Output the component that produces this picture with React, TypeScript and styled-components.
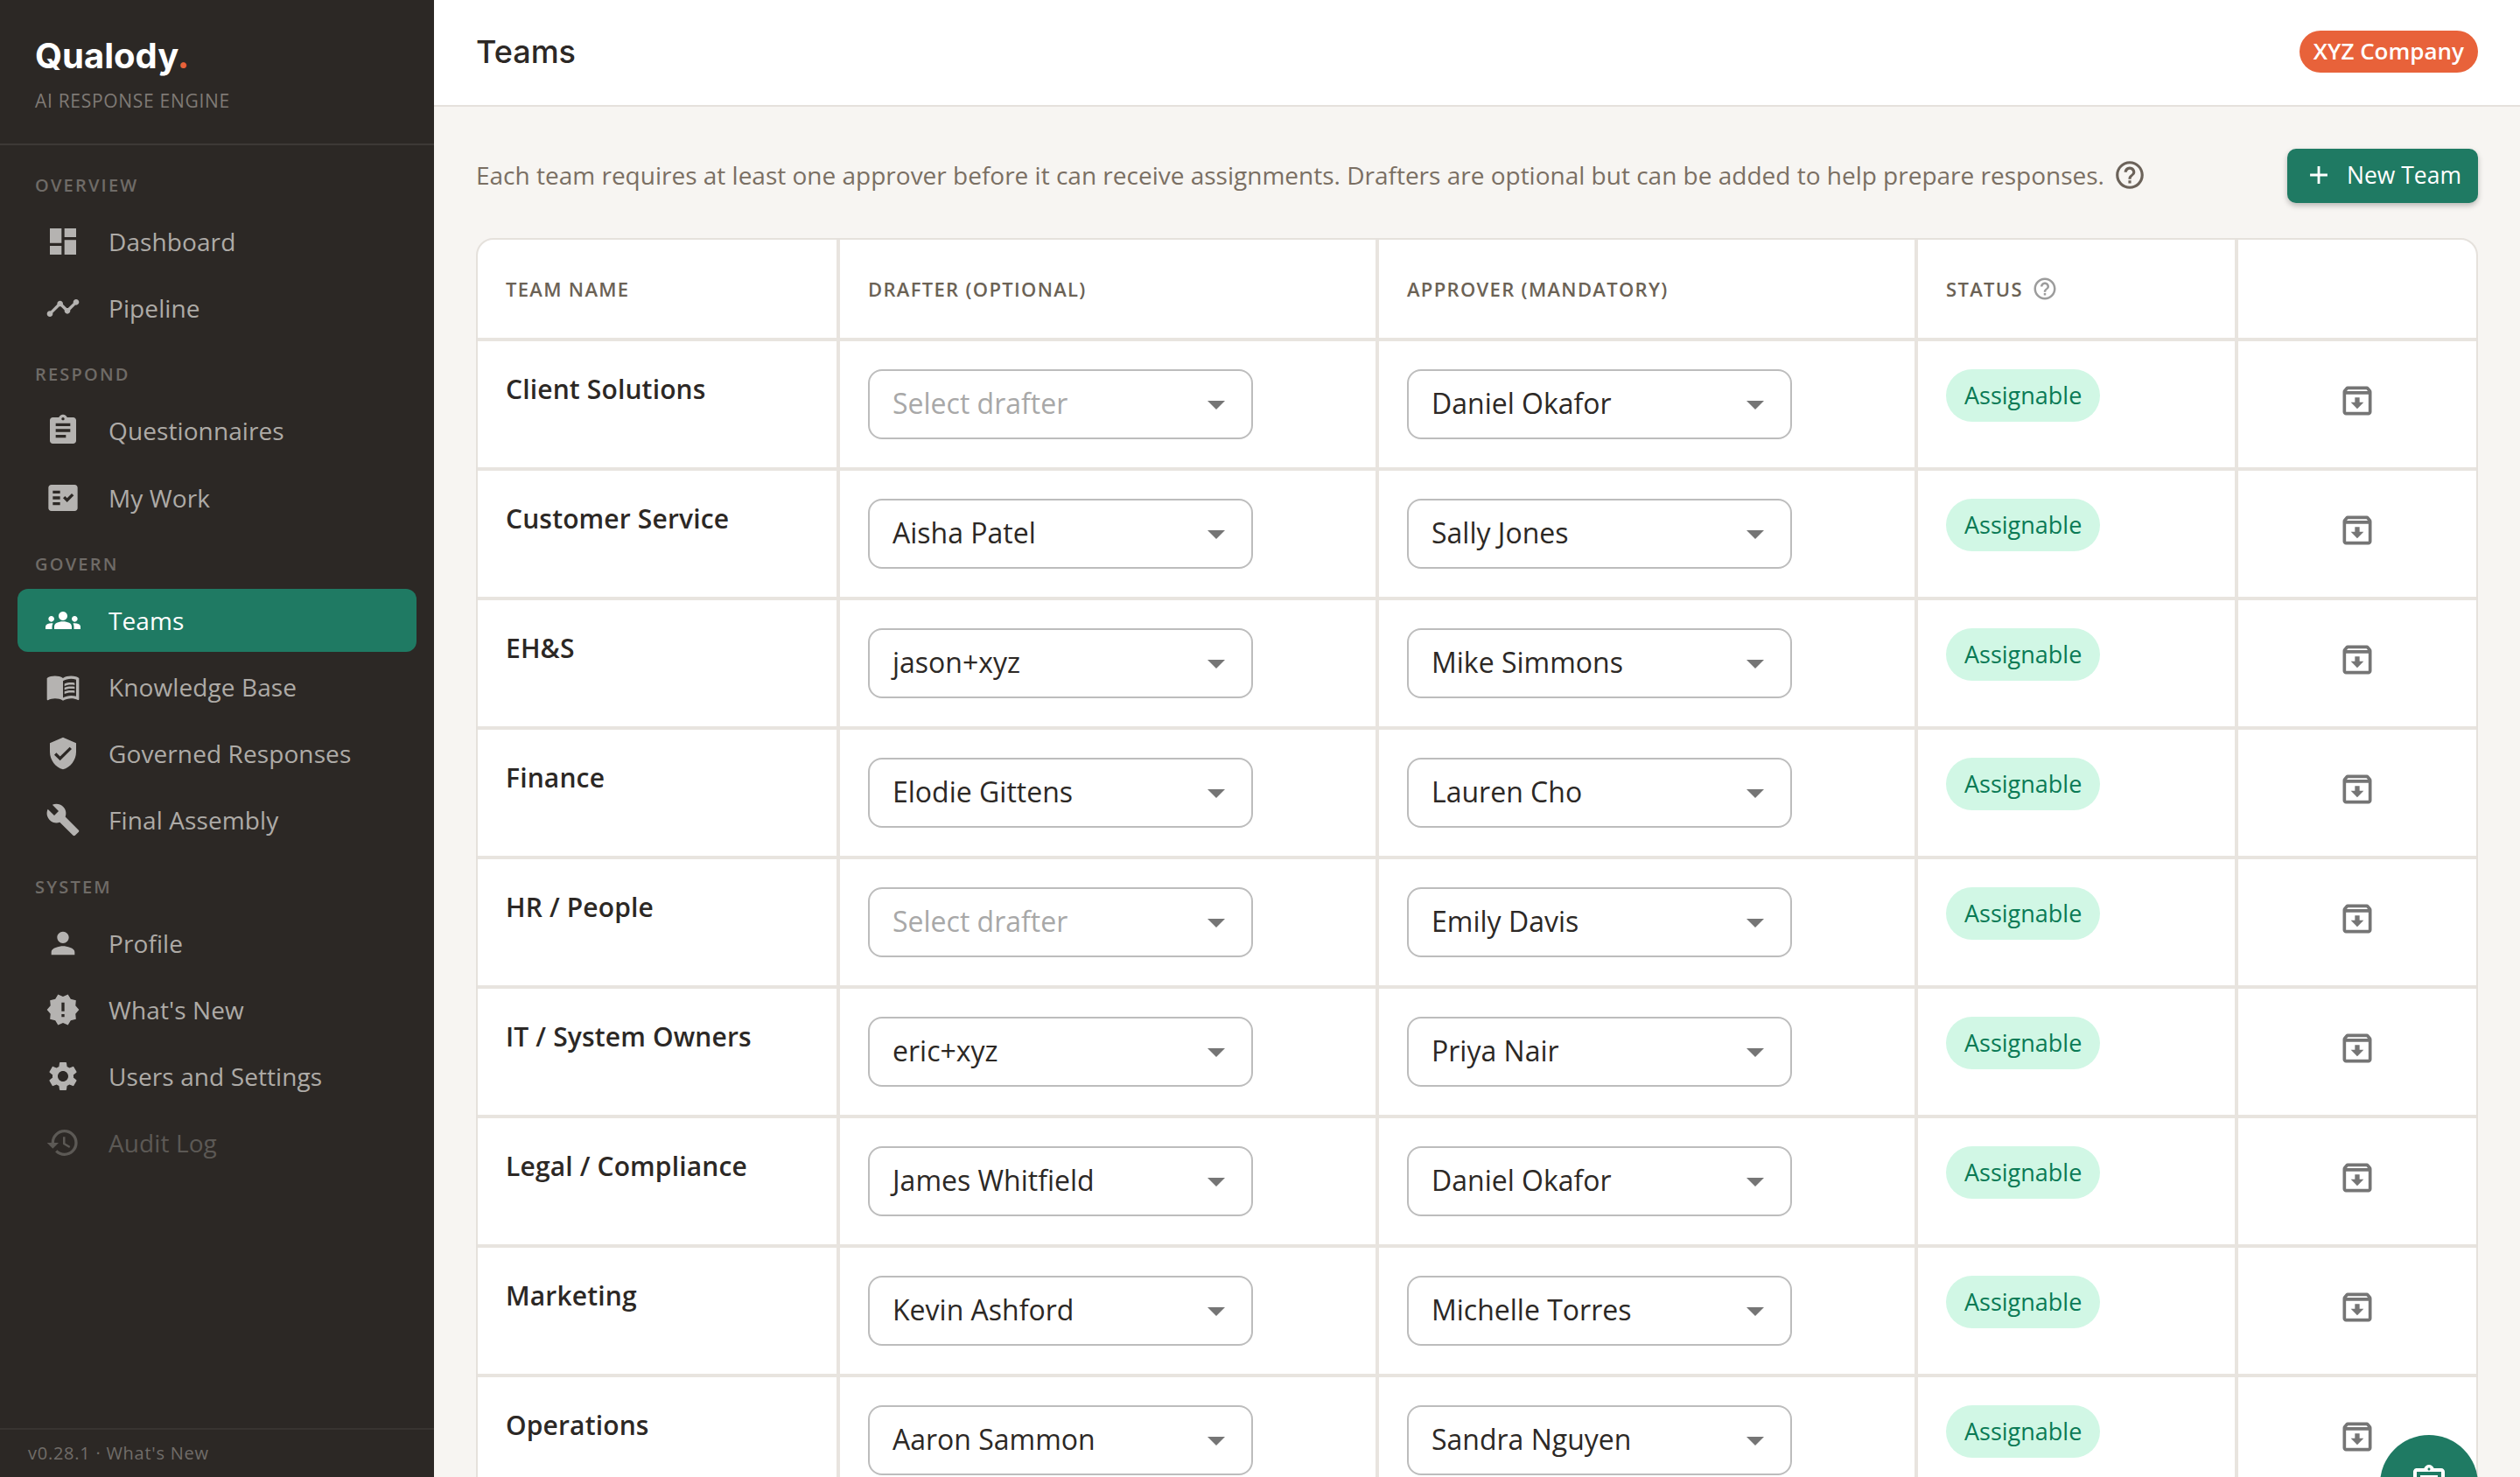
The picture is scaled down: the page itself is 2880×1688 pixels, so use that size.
import React from "react";
import styled, { createGlobalStyle } from "styled-components";
import {
  MdAdd,
  MdArrowDropDown,
  MdAssignment,
  MdBuild,
  MdDashboard,
  MdFactCheck,
  MdGroups,
  MdHelpOutline,
  MdHistory,
  MdMenuBook,
  MdNewReleases,
  MdOutlineArchive,
  MdOutlineAssignment,
  MdPerson,
  MdSettings,
  MdTimeline,
  MdVerifiedUser,
} from "react-icons/md";

const GlobalStyle = createGlobalStyle`
  html, body {
    margin: 0;
    padding: 0;
    height: 100%;
    overflow: hidden;
    background: #f7f5f2;
    font-family: "Open Sans", "Liberation Sans", sans-serif;
  }
  * { box-sizing: border-box; }
`;

const Shell = styled.div`
  display: flex;
  width: 2880px;
  height: 1688px;
  overflow: hidden;
`;

const Sidebar = styled.aside`
  display: flex;
  flex-direction: column;
  flex: 0 0 496px;
  height: 100%;
  background: #2c2825;
`;

const Brand = styled.div`
  height: 166px;
  padding: 40px 40px 0;
  border-bottom: 2px solid #3d3936;
`;

const Logo = styled.div`
  font-family: Inter, "Open Sans", sans-serif;
  font-size: 40px;
  font-weight: 700;
  line-height: 48px;
  color: #ffffff;
`;

const LogoDot = styled.span`
  color: #e8623a;
`;

const Tagline = styled.div`
  margin-top: 13px;
  font-size: 21px;
  line-height: 28px;
  letter-spacing: 0.7px;
  color: #7f7a75;
`;

const Nav = styled.nav`
  flex: 1;
  padding-top: 10px;
`;

const SectionLabel = styled.div`
  padding: 20px 40px 12px;
  font-size: 20px;
  font-weight: 600;
  line-height: 32px;
  letter-spacing: 2.2px;
  color: #6f6b67;
`;

const NavItem = styled.div<{ $active?: boolean; $disabled?: boolean }>`
  display: flex;
  align-items: center;
  gap: 32px;
  height: 72.2px;
  margin: 0 20px 4px;
  padding-left: 32px;
  border-radius: 12px;
  background: ${({ $active }) => ($active ? "#1f7a63" : "transparent")};
  color: ${({ $active, $disabled }) =>
    $active ? "#ffffff" : $disabled ? "#5c5955" : "#aeaba7"};
  font-size: 28px;
  letter-spacing: 0.1px;
  svg {
    flex: none;
    width: 40px;
    height: 40px;
    color: ${({ $active, $disabled }) =>
      $active ? "#ffffff" : $disabled ? "#5c5955" : "#b5b3b1"};
  }
`;

const SidebarFooter = styled.div`
  height: 56px;
  padding-left: 32px;
  border-top: 2px solid #383431;
  font-size: 20px;
  line-height: 54px;
  letter-spacing: 0.75px;
  color: #716d69;
`;

const Main = styled.main`
  position: relative;
  flex: 1;
  display: flex;
  flex-direction: column;
  min-width: 0;
  height: 100%;
  overflow: hidden;
  background: #f7f5f2;
`;

const TopBar = styled.header`
  display: flex;
  flex: none;
  align-items: center;
  justify-content: space-between;
  height: 122px;
  padding: 0 48px 2px;
  background: #ffffff;
  border-bottom: 2px solid #e5e1dc;
`;

const PageTitle = styled.h1`
  margin: 0;
  font-family: Inter, "Open Sans", sans-serif;
  font-size: 36px;
  font-weight: 500;
  color: #2c2825;
`;

const CompanyBadge = styled.div`
  display: flex;
  align-items: center;
  height: 48px;
  padding: 0 16px 3px;
  border-radius: 24px;
  background: #e8623a;
  color: #ffffff;
  font-size: 26px;
  font-weight: 600;
`;

const Content = styled.div`
  padding: 48px 48px 0;
`;

const IntroRow = styled.div`
  display: flex;
  align-items: center;
  justify-content: space-between;
  height: 62px;
  margin-bottom: 40px;
`;

const IntroText = styled.p`
  display: flex;
  align-items: center;
  gap: 10px;
  margin: 0;
  padding-bottom: 2px;
  font-size: 28px;
  color: #7a6f63;
  svg {
    width: 38px;
    height: 38px;
    color: #6b6259;
  }
`;

const NewTeamButton = styled.button`
  display: flex;
  align-items: center;
  gap: 15px;
  height: 62px;
  width: 218px;
  padding: 0 19px 2px;
  border: 0;
  border-radius: 10px;
  background: #1f7a63;
  box-shadow: 0 3px 6px rgba(0, 0, 0, 0.25);
  color: #ffffff;
  font-family: inherit;
  font-size: 26.5px;
  font-weight: 500;
  white-space: nowrap;
  svg {
    flex: none;
    width: 34px;
    height: 34px;
  }
`;

const Table = styled.div`
  border: 2px solid #e5e1dc;
  border-radius: 20px;
  background: #ffffff;
`;

const Row = styled.div<{ $head?: boolean }>`
  display: grid;
  grid-template-columns: 414px 616px 616px 366px 1fr;
  height: ${({ $head }) => ($head ? "116px" : "148px")};
`;

const Cell = styled.div<{ $last?: boolean; $center?: boolean }>`
  padding: 32px ${({ $center }) => ($center ? "0" : "32px")} 0;
  border-bottom: 4px solid #e8e4df;
  border-right: ${({ $last }) => ($last ? "0" : "4px solid #e8e4df")};
  ${({ $center }) => ($center ? "display: flex; justify-content: center;" : "")}
`;

const HeadCell = styled.div<{ $last?: boolean }>`
  display: flex;
  align-items: center;
  gap: 10px;
  padding: 0 32px 1px;
  border-bottom: 4px solid #e8e4df;
  border-right: ${({ $last }) => ($last ? "0" : "4px solid #e8e4df")};
  font-size: 22px;
  font-weight: 600;
  letter-spacing: 1.32px;
  color: #6b6255;
  svg {
    width: 30px;
    height: 30px;
    color: #9c9c9c;
  }
`;

const TeamName = styled.div`
  font-size: 30px;
  font-weight: 600;
  line-height: 46px;
  letter-spacing: 0.15px;
  color: #2c2825;
`;

const Select = styled.div<{ $placeholder?: boolean }>`
  display: flex;
  align-items: center;
  justify-content: space-between;
  width: 440px;
  height: 80px;
  padding: 0 16px 0 26px;
  border: 2px solid #bdbdbd;
  border-radius: 16px;
  background: #ffffff;
  color: ${({ $placeholder }) => ($placeholder ? "#a8a8a8" : "#2c2825")};
  font-size: 32px;
  svg {
    width: 48px;
    height: 48px;
    color: #757575;
  }
`;

const SelectValue = styled.span`
  margin-top: -3px;
`;

const StatusPill = styled.div`
  display: inline-flex;
  align-items: center;
  height: 60px;
  padding: 0 21px 1px;
  border-radius: 30px;
  background: #d1f7e5;
  color: #0a7a55;
  font-size: 27px;
`;

const ArchiveButton = styled.div`
  display: flex;
  align-items: center;
  justify-content: center;
  width: 72px;
  height: 72px;
  color: #757575;
  svg {
    width: 44px;
    height: 44px;
  }
`;

const Fab = styled.div`
  position: absolute;
  top: 1640px;
  right: 48px;
  display: flex;
  align-items: center;
  justify-content: center;
  width: 112px;
  height: 112px;
  border-radius: 50%;
  background: #1f7a63;
  color: #ffffff;
  svg {
    width: 48px;
    height: 48px;
  }
`;

type NavEntry = { label: string; icon: React.ReactNode; active?: boolean; disabled?: boolean };

const navSections: { title: string; items: NavEntry[] }[] = [
  {
    title: "OVERVIEW",
    items: [
      { label: "Dashboard", icon: <MdDashboard /> },
      { label: "Pipeline", icon: <MdTimeline /> },
    ],
  },
  {
    title: "RESPOND",
    items: [
      { label: "Questionnaires", icon: <MdAssignment /> },
      { label: "My Work", icon: <MdFactCheck /> },
    ],
  },
  {
    title: "GOVERN",
    items: [
      { label: "Teams", icon: <MdGroups />, active: true },
      { label: "Knowledge Base", icon: <MdMenuBook /> },
      { label: "Governed Responses", icon: <MdVerifiedUser /> },
      { label: "Final Assembly", icon: <MdBuild /> },
    ],
  },
  {
    title: "SYSTEM",
    items: [
      { label: "Profile", icon: <MdPerson /> },
      { label: "What's New", icon: <MdNewReleases /> },
      { label: "Users and Settings", icon: <MdSettings /> },
      { label: "Audit Log", icon: <MdHistory />, disabled: true },
    ],
  },
];

const teams = [
  { name: "Client Solutions", drafter: "", approver: "Daniel Okafor" },
  { name: "Customer Service", drafter: "Aisha Patel", approver: "Sally Jones" },
  { name: "EH&S", drafter: "jason+xyz", approver: "Mike Simmons" },
  { name: "Finance", drafter: "Elodie Gittens", approver: "Lauren Cho" },
  { name: "HR / People", drafter: "", approver: "Emily Davis" },
  { name: "IT / System Owners", drafter: "eric+xyz", approver: "Priya Nair" },
  { name: "Legal / Compliance", drafter: "James Whitfield", approver: "Daniel Okafor" },
  { name: "Marketing", drafter: "Kevin Ashford", approver: "Michelle Torres" },
  { name: "Operations", drafter: "Aaron Sammon", approver: "Sandra Nguyen" },
];

const App: React.FC = () => {
  return (
    <Shell>
      <GlobalStyle />
      <Sidebar>
        <Brand>
          <Logo>
            Qualody<LogoDot>.</LogoDot>
          </Logo>
          <Tagline>AI RESPONSE ENGINE</Tagline>
        </Brand>
        <Nav>
          {navSections.map((section) => (
            <div key={section.title}>
              <SectionLabel>{section.title}</SectionLabel>
              {section.items.map((item) => (
                <NavItem key={item.label} $active={item.active} $disabled={item.disabled}>
                  {item.icon}
                  {item.label}
                </NavItem>
              ))}
            </div>
          ))}
        </Nav>
        <SidebarFooter>v0.28.1 · What's New</SidebarFooter>
      </Sidebar>
      <Main>
        <TopBar>
          <PageTitle>Teams</PageTitle>
          <CompanyBadge>XYZ Company</CompanyBadge>
        </TopBar>
        <Content>
          <IntroRow>
            <IntroText>
              Each team requires at least one approver before it can receive assignments. Drafters are optional but can be added to help prepare responses.
              <MdHelpOutline />
            </IntroText>
            <NewTeamButton>
              <MdAdd />
              New Team
            </NewTeamButton>
          </IntroRow>
          <Table>
            <Row $head>
              <HeadCell>TEAM NAME</HeadCell>
              <HeadCell>DRAFTER (OPTIONAL)</HeadCell>
              <HeadCell>APPROVER (MANDATORY)</HeadCell>
              <HeadCell>
                STATUS
                <MdHelpOutline />
              </HeadCell>
              <HeadCell $last />
            </Row>
            {teams.map((team) => (
              <Row key={team.name}>
                <Cell>
                  <TeamName>{team.name}</TeamName>
                </Cell>
                <Cell>
                  <Select $placeholder={!team.drafter}>
                    <SelectValue>{team.drafter || "Select drafter"}</SelectValue>
                    <MdArrowDropDown />
                  </Select>
                </Cell>
                <Cell>
                  <Select>
                    <SelectValue>{team.approver}</SelectValue>
                    <MdArrowDropDown />
                  </Select>
                </Cell>
                <Cell>
                  <StatusPill>Assignable</StatusPill>
                </Cell>
                <Cell $last $center>
                  <ArchiveButton>
                    <MdOutlineArchive />
                  </ArchiveButton>
                </Cell>
              </Row>
            ))}
          </Table>
        </Content>
        <Fab>
          <MdOutlineAssignment />
        </Fab>
      </Main>
    </Shell>
  );
};

export default App;
